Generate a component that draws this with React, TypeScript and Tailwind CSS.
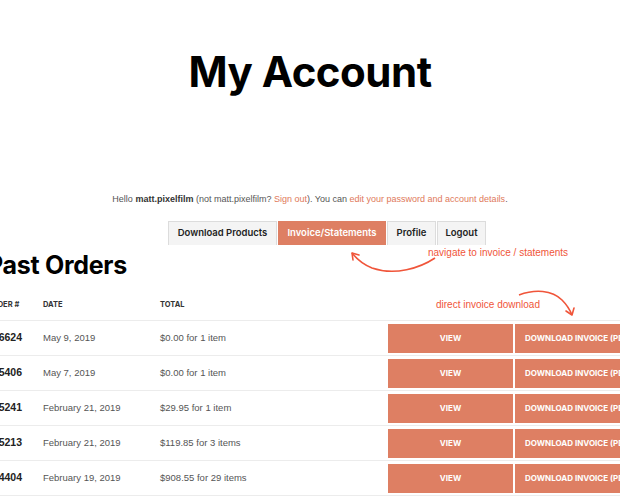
import React from 'react'

const orders = [
  { num: '#16624', date: 'May 9, 2019', total: '$0.00 for 1 item' },
  { num: '#15406', date: 'May 7, 2019', total: '$0.00 for 1 item' },
  { num: '#15241', date: 'February 21, 2019', total: '$29.95 for 1 item' },
  { num: '#15213', date: 'February 21, 2019', total: '$119.85 for 3 items' },
  { num: '#14404', date: 'February 19, 2019', total: '$908.55 for 29 items' },
]

const tabs = [
  { label: 'Download Products', w: 'w-[109px]' },
  { label: 'Invoice/Statements', w: 'w-[108px]' },
  { label: 'Profile', w: 'w-[49px]' },
  { label: 'Logout', w: 'w-[49px]' },
]

export default function App() {
  return (
    <div className="relative w-[620px] h-[500px] overflow-hidden bg-white font-['Liberation_Sans',Arial,sans-serif]">
      <h1 className="pt-[47px] text-center text-[42px] leading-[50px] font-bold tracking-[-0.5px] text-black font-['Inter',sans-serif]">
        My Account
      </h1>

      <p className="mt-[96px] text-center text-[9px] leading-[12px] text-[#555]">
        Hello <strong className="text-[#333]">matt.pixelfilm</strong> (not matt.pixelfilm?{' '}
        <a className="text-[#e0795a]">Sign out</a>). You can{' '}
        <a className="text-[#e0795a]">edit your password and account details</a>.
      </p>

      <ul className="mt-[16px] flex justify-center gap-[1px] pl-[34px]">
        {tabs.map((t) => {
          const active = t.label === 'Invoice/Statements'
          return (
            <li
              key={t.label}
              className={
                active
                  ? `${t.w} h-[24px] flex items-center justify-center bg-[#de7f63] border border-[#de7f63] text-white text-[9.5px] font-semibold font-['Inter',sans-serif]`
                  : `${t.w} h-[24px] flex items-center justify-center bg-[#f4f4f4] border border-[#dcdcdc] border-b-0 text-[#222] text-[9.5px] font-semibold font-['Inter',sans-serif]`
              }
            >
              {t.label}
            </li>
          )
        })}
      </ul>

      <div className="-ml-[13px] w-[700px]">
        <h2 className="mt-[5px] text-[25px] leading-[30px] font-bold tracking-[-0.3px] text-black font-['Inter',sans-serif]">
          Past Orders
        </h2>

        <div className="mt-[9px] flex items-center h-[31px] text-[7.5px] font-bold text-[#333] font-['Inter',sans-serif]">
          <div className="w-[56px]">ORDER #</div>
          <div className="w-[117px]">DATE</div>
          <div className="w-[228px]">TOTAL</div>
        </div>

        {orders.map((o) => (
          <div key={o.num} className="flex items-center h-[35px] border-t border-[#ececec]">
            <div className="w-[56px] text-[10.5px] font-bold text-[#222]">{o.num}</div>
            <div className="w-[117px] text-[9.5px] text-[#555]">{o.date}</div>
            <div className="w-[228px] text-[9.5px] text-[#555]">{o.total}</div>
            <div className="w-[125px] h-[29px] flex items-center justify-center bg-[#de7f63] text-white text-[8px] font-bold font-['Inter',sans-serif]">
              VIEW
            </div>
            <div className="ml-[2px] h-[29px] px-[10px] flex items-center whitespace-nowrap bg-[#de7f63] text-white text-[8px] font-bold font-['Inter',sans-serif]">
              DOWNLOAD INVOICE (PDF)
            </div>
          </div>
        ))}
        <div className="border-t border-[#ececec]" />
      </div>

      {/* annotations */}
      <span className="absolute left-[428px] top-[245px] text-[10px] text-[#f0553a]">
        navigate to invoice / statements
      </span>
      <span className="absolute left-[436px] top-[297px] text-[10px] text-[#f0553a]">
        direct invoice download
      </span>
      <svg className="absolute left-0 top-0" width="620" height="500" fill="none">
        <path d="M435 258 C 420 268, 395 276, 372 268 C 362 264, 356 258, 352 253" stroke="#f0553a" strokeWidth="1.6" />
        <path d="M352 253 L 353 260 M352 253 L 359 255" stroke="#f0553a" strokeWidth="1.6" strokeLinecap="round" />
        <path d="M519 295 C 535 289, 552 290, 562 300 C 567 305, 570 310, 572 315" stroke="#f0553a" strokeWidth="1.6" />
        <path d="M572 315 L 566 311 M572 315 L 574 308" stroke="#f0553a" strokeWidth="1.6" strokeLinecap="round" />
      </svg>
    </div>
  )
}
